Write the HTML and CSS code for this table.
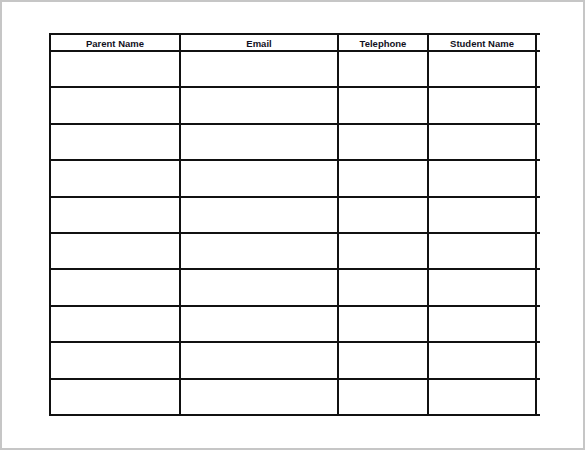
FILE: index.html
```html
<!DOCTYPE html>
<html>
<head>
<meta charset="utf-8">
<link rel="stylesheet" href="styles.css">
</head>
<body>
<div class="page">
  <table class="sheet">
    <colgroup>
      <col class="c1"><col class="c2"><col class="c3"><col class="c4"><col class="c5">
    </colgroup>
    <thead>
      <tr><th>Parent Name</th><th>Email</th><th>Telephone</th><th>Student Name</th><th class="tail"></th></tr>
    </thead>
    <tbody>
      <tr><td></td><td></td><td></td><td></td><td class="tail"></td></tr>
      <tr><td></td><td></td><td></td><td></td><td class="tail"></td></tr>
      <tr><td></td><td></td><td></td><td></td><td class="tail"></td></tr>
      <tr><td></td><td></td><td></td><td></td><td class="tail"></td></tr>
      <tr><td></td><td></td><td></td><td></td><td class="tail"></td></tr>
      <tr><td></td><td></td><td></td><td></td><td class="tail"></td></tr>
      <tr><td></td><td></td><td></td><td></td><td class="tail"></td></tr>
      <tr><td></td><td></td><td></td><td></td><td class="tail"></td></tr>
      <tr><td></td><td></td><td></td><td></td><td class="tail"></td></tr>
      <tr><td></td><td></td><td></td><td></td><td class="tail"></td></tr>
    </tbody>
  </table>
</div>
</body>
</html>
```
FILE: styles.css
```css
html, body {
  margin: 0;
  padding: 0;
  background: #ffffff;
}
.page {
  box-sizing: border-box;
  width: 585px;
  height: 450px;
  border: 2px solid #c6c6c6;
  background: #ffffff;
  padding: 31px 0 0 47px;
}
.sheet {
  border-collapse: collapse;
  table-layout: fixed;
  width: 490px;
  font-family: "Liberation Sans", Arial, sans-serif;
}
.c1 { width: 130px; }
.c2 { width: 158px; }
.c3 { width: 90px; }
.c4 { width: 108px; }
.c5 { width: 4px; }
.sheet th, .sheet td {
  border: 2px solid #111;
  padding: 0;
}
.sheet th {
  height: 13px;
  font-size: 9.5px;
  font-weight: bold;
  color: #111122;
  text-align: center;
  vertical-align: middle;
  line-height: 10px;
  padding-top: 2px;
}
.sheet td {
  height: 34.4px;
}
.sheet .tail {
  border-right: none;
}
```
